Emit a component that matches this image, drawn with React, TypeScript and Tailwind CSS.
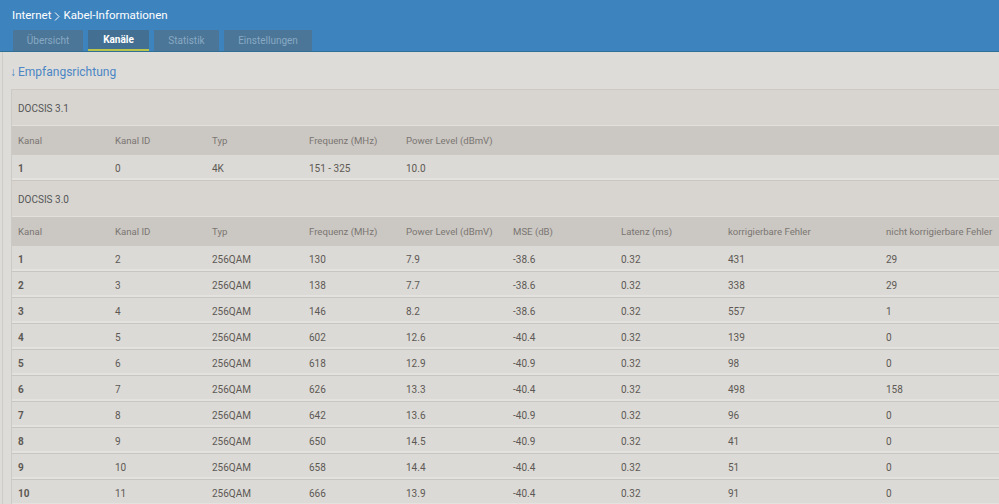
import React from 'react';

const tabs = [
  { label: 'Übersicht', w: 'w-[70px]' },
  { label: 'Kanäle', w: 'w-[61px]', active: true },
  { label: 'Statistik', w: 'w-[65px]' },
  { label: 'Einstellungen', w: 'w-[88px]' },
];

const colW = ['w-[97px]', 'w-[97px]', 'w-[97px]', 'w-[97px]', 'w-[107px]', 'w-[108px]', 'w-[107px]', 'w-[158px]', 'w-[140px]'];

const head31 = ['Kanal', 'Kanal ID', 'Typ', 'Frequenz (MHz)', 'Power Level (dBmV)'];
const rows31 = [['1', '0', '4K', '151 - 325', '10.0']];

const head30 = [
  'Kanal',
  'Kanal ID',
  'Typ',
  'Frequenz (MHz)',
  'Power Level (dBmV)',
  'MSE (dB)',
  'Latenz (ms)',
  'korrigierbare Fehler',
  'nicht korrigierbare Fehler',
];

const rows30 = [
  ['1', '2', '256QAM', '130', '7.9', '-38.6', '0.32', '431', '29'],
  ['2', '3', '256QAM', '138', '7.7', '-38.6', '0.32', '338', '29'],
  ['3', '4', '256QAM', '146', '8.2', '-38.6', '0.32', '557', '1'],
  ['4', '5', '256QAM', '602', '12.6', '-40.4', '0.32', '139', '0'],
  ['5', '6', '256QAM', '618', '12.9', '-40.9', '0.32', '98', '0'],
  ['6', '7', '256QAM', '626', '13.3', '-40.4', '0.32', '498', '158'],
  ['7', '8', '256QAM', '642', '13.6', '-40.9', '0.32', '96', '0'],
  ['8', '9', '256QAM', '650', '14.5', '-40.9', '0.32', '41', '0'],
  ['9', '10', '256QAM', '658', '14.4', '-40.4', '0.32', '51', '0'],
  ['10', '11', '256QAM', '666', '13.9', '-40.4', '0.32', '91', '0'],
];

function Section({ title, head, rows }: { title: string; head: string[]; rows: string[][] }) {
  return (
    <div>
      <div className="h-[36px] flex items-center px-[6px] pt-[1px] bg-[#d8d5d1] border-b border-[#e2e0dc] text-[#555] text-[10px]">
        {title}
      </div>
      <div className="h-[29px] flex items-center pt-[1px] bg-[#cbc7c2] text-[#7a7672] text-[9.6px]">
        {head.map((h, i) => (
          <div key={i} className={`${colW[i]} shrink-0 px-[6px] whitespace-nowrap`}>
            {h}
          </div>
        ))}
      </div>
      {rows.map((r, ri) => (
        <div
          key={ri}
          className="h-[26px] flex items-center pt-[1px] bg-[#dcdad6] border-b border-[#c9c6c1] shadow-[inset_0_-2px_0_#e4e2de] text-[#5c5955] text-[10px]"
        >
          {r.map((c, i) => (
            <div key={i} className={`${colW[i]} shrink-0 px-[6px] whitespace-nowrap ${i === 0 ? 'font-bold' : ''}`}>
              {c}
            </div>
          ))}
        </div>
      ))}
    </div>
  );
}

export default function App() {
  return (
    <div className="h-screen overflow-hidden bg-[#dedcd8] font-['Roboto',sans-serif]">
      <header className="h-[52px] bg-[#3d83be] border-b border-[#2f6f95] px-[12px] flex flex-col">
        <div className="h-[30px] flex items-center pt-[2px] text-white text-[11.5px] gap-[2px]">
          <span>Internet</span>
          <svg width="8" height="11" viewBox="0 0 8 11" fill="none" stroke="white" strokeWidth="1">
            <path d="M2 1.5l4 4-4 4" />
          </svg>
          <span>Kabel-Informationen</span>
        </div>
        <nav className="flex gap-[5px] pl-[1px]">
          {tabs.map((t) => (
            <div
              key={t.label}
              className={`${t.w} h-[21px] flex items-center justify-center text-[10px] ${
                t.active
                  ? 'bg-[#436f92] text-white font-bold border-b-2 border-[#b8c44a]'
                  : 'bg-[#4c7697] text-[#87a9c4]'
              }`}
            >
              {t.label}
            </div>
          ))}
        </nav>
      </header>
      <main className="ml-[2px] border-l border-[#cfccc8] h-full">
        <div className="h-[37px] flex items-center pt-[3px] pl-[7px] text-[#4a86c5] text-[12px]">
          <span className="mr-[2px]">↓</span>
          <span>Empfangsrichtung</span>
        </div>
        <div className="ml-[8px] border-l border-t border-[#cdcac5]">
          <Section title="DOCSIS 3.1" head={head31} rows={rows31} />
          <Section title="DOCSIS 3.0" head={head30} rows={rows30} />
        </div>
      </main>
    </div>
  );
}
